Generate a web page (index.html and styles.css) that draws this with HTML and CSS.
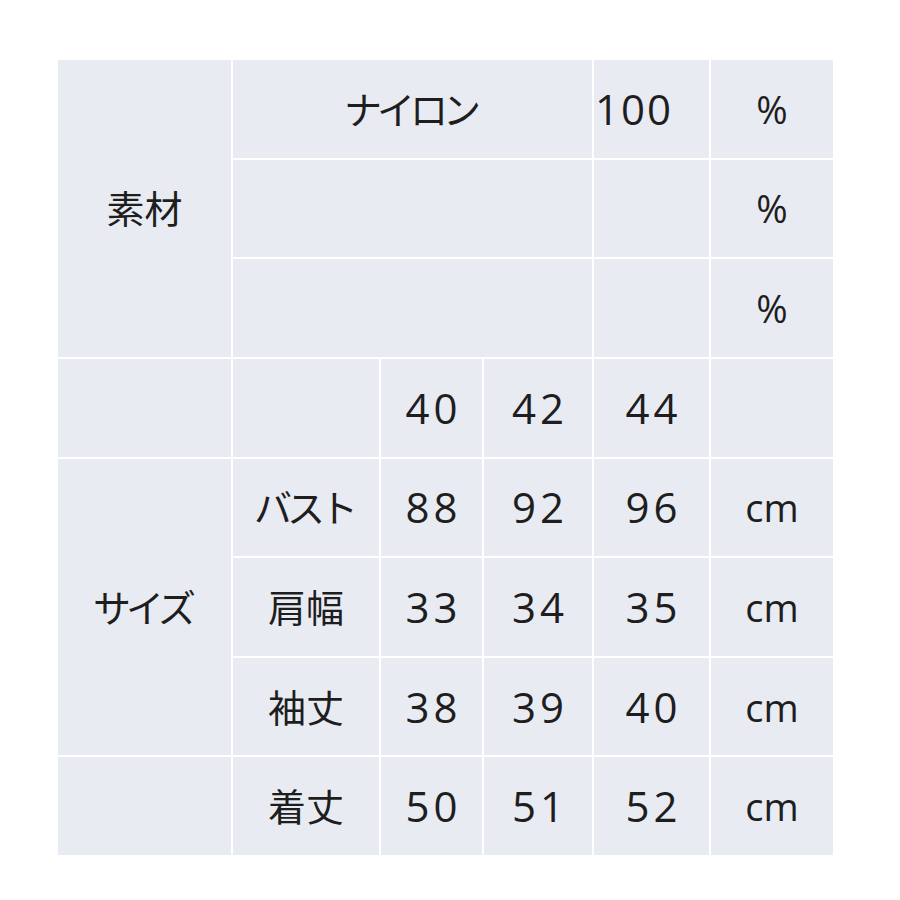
FILE: index.html
```html
<!DOCTYPE html>
<html lang="ja">
<head>
<meta charset="utf-8">
<title>素材・サイズ</title>
<link rel="stylesheet" href="styles.css">
</head>
<body>
<div class="sheet">
  <div class="cell c1 r1-3">素材</div>
  <div class="cell c2-4 kana">ナイロン</div>
  <div class="cell num lead">100</div>
  <div class="cell">%</div>

  <div class="cell c2-4"></div>
  <div class="cell"></div>
  <div class="cell">%</div>

  <div class="cell c2-4"></div>
  <div class="cell"></div>
  <div class="cell">%</div>

  <div class="cell"></div>
  <div class="cell"></div>
  <div class="cell num">40</div>
  <div class="cell num">42</div>
  <div class="cell num">44</div>
  <div class="cell"></div>

  <div class="cell c1 r5-7 kana">サイズ</div>
  <div class="cell kana">バスト</div>
  <div class="cell num">88</div>
  <div class="cell num">92</div>
  <div class="cell num">96</div>
  <div class="cell">cm</div>

  <div class="cell">肩幅</div>
  <div class="cell num">33</div>
  <div class="cell num">34</div>
  <div class="cell num">35</div>
  <div class="cell">cm</div>

  <div class="cell">袖丈</div>
  <div class="cell num">38</div>
  <div class="cell num">39</div>
  <div class="cell num">40</div>
  <div class="cell">cm</div>

  <div class="cell"></div>
  <div class="cell">着丈</div>
  <div class="cell num">50</div>
  <div class="cell num">51</div>
  <div class="cell num">52</div>
  <div class="cell">cm</div>
</div>
</body>
</html>
```

FILE: styles.css
```css
html, body {
  margin: 0;
  padding: 0;
  background: #ffffff;
}

body {
  padding: 60px 0 0 58px;
  font-family: "Open Sans", "Noto Sans CJK JP", sans-serif;
  color: #1e1e1e;
}

.sheet {
  display: grid;
  grid-template-columns: 173px 146px 101px 108px 115px 122px;
  grid-template-rows: repeat(8, 1fr);
  gap: 2px;
  width: 775px;
  height: 795px;
}

.cell {
  background: #e9ebf3;
  display: flex;
  align-items: center;
  justify-content: center;
  font-size: 38px;
  line-height: 1;
}

.kana {
  letter-spacing: -5px;
  text-indent: -5px;
}

.num {
  font-size: 42px;
  letter-spacing: 4px;
  text-indent: 4px;
}

.lead {
  justify-content: flex-start;
  padding-left: 1px;
  letter-spacing: 2px;
  text-indent: 0;
}

.c1 {
  grid-column: 1;
}

.c2-4 {
  grid-column: span 3;
}

.r1-3 {
  grid-row: 1 / span 3;
}

.r5-7 {
  grid-row: 5 / span 3;
}
```
